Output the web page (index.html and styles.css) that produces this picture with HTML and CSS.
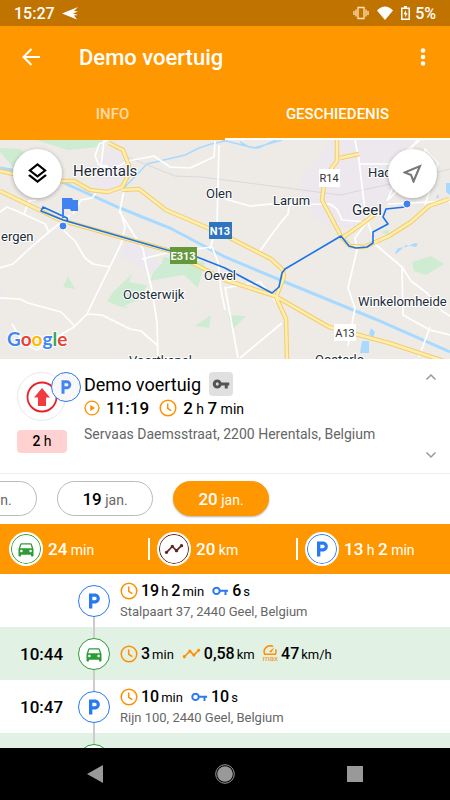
FILE: index.html
```html
<!DOCTYPE html>
<html lang="nl">
<head>
	<meta charset="UTF-8">
	<meta name="viewport" content="width=device-width, initial-scale=1">
	<title>Demo voertuig</title>
	<link rel="stylesheet" href="styles.css">
</head>
<body>
	<!-- icons -->
	<svg class="sprite" aria-hidden="true">
		<symbol id="car" viewBox="0 0 24 24"><path d="M18.92 6.01C18.72 5.42 18.16 5 17.5 5h-11c-.66 0-1.21.42-1.42 1.01L3 12v8c0 .55.45 1 1 1h1c.55 0 1-.45 1-1v-1h12v1c0 .55.45 1 1 1h1c.55 0 1-.45 1-1v-8l-2.08-5.99zM6.5 16c-.83 0-1.5-.67-1.5-1.5S5.67 13 6.5 13s1.5.67 1.5 1.5S7.33 16 6.5 16zm11 0c-.83 0-1.5-.67-1.5-1.5s.67-1.5 1.5-1.5 1.5.67 1.5 1.5-.67 1.5-1.5 1.5zM5 11l1.5-4.5h11L19 11H5z"/></symbol>
		<symbol id="parking" viewBox="0 0 24 24"><path d="M13 3H6v18h4v-6h3c3.31 0 6-2.69 6-6s-2.69-6-6-6zm.2 8H10V7h3.2c1.1 0 2 .9 2 2s-.9 2-2 2z"/></symbol>
		<symbol id="route" viewBox="0 0 24 24"><path d="M23 8c0 1.1-.9 2-2 2-.18 0-.35-.02-.51-.07l-3.56 3.55c.05.16.07.34.07.52 0 1.1-.9 2-2 2s-2-.9-2-2c0-.18.02-.36.07-.52l-2.55-2.55c-.16.05-.34.07-.52.07s-.36-.02-.52-.07l-4.55 4.56c.05.16.07.33.07.51 0 1.1-.9 2-2 2s-2-.9-2-2 .9-2 2-2c.18 0 .35.02.51.07l4.56-4.55C8.02 9.36 8 9.18 8 9c0-1.1.9-2 2-2s2 .9 2 2c0 .18-.02.36-.07.52l2.55 2.55c.16-.05.34-.07.52-.07s.36.02.52.07l3.55-3.56C19.02 8.35 19 8.18 19 8c0-1.1.9-2 2-2s2 .9 2 2z"/></symbol>
		<symbol id="key" viewBox="0 0 24 24"><path d="M12.65 10C11.83 7.67 9.61 6 7 6c-3.31 0-6 2.69-6 6s2.69 6 6 6c2.61 0 4.83-1.67 5.65-4H17v4h4v-4h2v-4H12.65zM7 14c-1.1 0-2-.9-2-2s.9-2 2-2 2 .9 2 2-.9 2-2 2z"/></symbol>
		<symbol id="contact" viewBox="0 0 17 18"><path d="M4.500 5.700a3.200 3.200 0 1 0 0 6.400a3.200 3.200 0 1 0 0-6.400M7.700 8.700h8.300M13.500 9v4" fill="none" stroke="currentColor" stroke-width="2"/></symbol>
		<symbol id="clock" viewBox="0 0 18 18"><g fill="none" stroke="currentColor" stroke-width="1.500"><circle cx="9" cy="9" r="7.800"/><path d="M8.700 4.500v4.800l3.600 2.400"/></g></symbol>
		<symbol id="start" viewBox="0 0 18 18"><circle cx="9" cy="9" r="7.800" fill="none" stroke="currentColor" stroke-width="1.500"/><path d="M7 5.500l5.500 3.500L7 12.500z"/></symbol>
	</svg>

	<div class="app">
		<header class="header">
			<div class="statusbar">
				<span class="statusbar-time">15:27</span>
				<svg class="statusbar-plane" width="17" height="13" viewBox="0 0 17 13"><path d="M0 6.500L16 0l-4 4 4 .5-5 2 5 1.500-4 .5 3 4z"/></svg>
				<svg width="16" height="14" viewBox="0 0 16 14"><path d="M5 1.500h6v11H5zM3 3.500v7M13 3.500v7M1 5v4M15 5v4" fill="none" stroke="#ffe4b8" stroke-width="1.300"/></svg>
				<svg width="18" height="14" viewBox="0 0 18 14"><path d="M1 4.500Q9-3.500 17 4.500L9 14z"/></svg>
				<svg width="9" height="14" viewBox="0 0 9 14"><path d="M3 0h3v1.500h3V14H0V1.500h3zM1.500 3v9.500h6V3z" fill-rule="evenodd"/><path d="M5 4L2.500 8.200h1.800L4 11.500l2.700-4.300H4.900z"/></svg>
				<span class="statusbar-battery">5%</span>
			</div>
			<div class="toolbar">
				<button class="icon-button" aria-label="Terug">
					<svg width="18" height="18" viewBox="0 0 18 18"><path d="M18 9H2M9.500 1L1.500 9l8 8" fill="none" stroke="#fff" stroke-width="2"/></svg>
				</button>
				<h1 class="toolbar-title">Demo voertuig</h1>
				<button class="icon-button" aria-label="Meer">
					<svg width="6" height="18" viewBox="0 0 6 18"><circle cx="3" cy="2.500" r="2.300"/><circle cx="3" cy="9" r="2.300"/><circle cx="3" cy="15.500" r="2.300"/></svg>
				</button>
			</div>
			<nav class="tabs">
				<button class="tab">INFO</button>
				<button class="tab tab-active">GESCHIEDENIS</button>
			</nav>
		</header>

		<!-- map -->
		<section class="map">
			<svg class="map-canvas" viewBox="0 0 450 219" preserveAspectRatio="xMidYMid slice">
				<rect width="450" height="219" fill="#eeebe7"/>
				<g fill="#ece8ed">
					<path d="M92 25l20-18 16 5 3 30-20 10-20-9zM126 99l14 1 15 18 8 10-10 7-32-18zM330 0h85l-8 45-50 45-42-10-18-35zM0 140l3 10-3 10z"/>
				</g>
				<g fill="#ceecd2">
					<path d="M14 28L0 12v-4l20 1 15 12-12 25zM36 0h72l-10 7-30 3-16-5zM68 136l7 13-12-2zM132 134l-3 8 18 3-7 14-16 7 8 3-14-3-11-5 6-9zM163 117l42 5-7 26-14-13-19 3-15 3 3-8 9-10zM211 175l-2 13-14-2zM228 175l18 1-14 14zM412 122l19-6 13 8-18 11-12-4zM383 91l6-1-1 5-6-2z"/>
				</g>
				<g fill="none" stroke="#a8daff">
					<path d="M0 28l18 3M62 42L120 68l50 20 55 29 60 25 90 37 75 33" stroke-width="3"/>
					<path d="M222 0l32 8 28-8M225 1l-14 3-12 4-14 7-38 9-23 24M240 2l9 5 9 1 18-8" stroke-width="1.500"/>
				</g>
				<path d="M396 114l10-9 10 2 2-3-3-1-9 4-8 1-3 5zM371 188l4 4-2 6-4-4zM362 201h7v12h-9zM446 43h4v12l-4-3zM436 58l2-4 1 4z" fill="#a8daff"/>
				<path d="M125 16l50 20 26 1 24 3 70 9 45 6 50-11 60-15" fill="none" stroke="#d8d9da"/>
				<g fill="none" stroke="#fff" stroke-width="1.700" stroke-linejoin="round">
					<path d="M108 0l-9 4-4 12 4 9 9 1M104 0l-2 18-1 8 12 3 15-8 26-5 16 11 20 1 24-11 1-16M124 50l-4 20 5 17-4 17-34 70-13 13-27 16-10 7-13-6-12-20M119 71l24 38 3 16 6 25 5 33 1 36M142 119l24-6 46-6 6 15 3 28 4 20M210 109l7-24 2-80M0 72l7-5 10 4 28 13 4 8-20 17-16 15-13 4M49 92l11-9 10-8M60 87l15 14 10 17 8 6 17 3M73 74l8-14 11-2 4-5M24 74l5-13 7-1M0 158l20 1 8 4 33 9 14 14M87 174l15 1 28 14 11 2 16 14"/>
					<path d="M225 59l25 7 22-2 13 1 45-1 7 5 5 11 24 2M289 67l-1 7-6 7-10 13-12 17M355 0l4 20 5 43 4 20 8 22 26 22 9 14 16 12 15 18 8 5M402 126l1 49 27 15 20 5M359 24h30l31-24M388 60l34-35 3-16 13 14-13 42M366 83l-11 15 2 12-9 38 7 20-7 38M388 64l62-3 3 15M430 187l-11 30M387 61l18-42 12-19M225 147l13 71M225 148l35-6 21 26M240 218l42-35"/>
				</g>
				<g fill="none" stroke="#f1cd6c" stroke-width="4.500" stroke-linejoin="round">
					<path d="M109 3l14 7 6 16-1 10-6 11-14 5-18-2-16-9H60M0 31l14 3M122 50l17-1 27 21 42 18 22 10 41 21 12 11 1 7-8 20 10 22 1 40M0 51l60 29 110 31 55 29 50 16 54 31 60 16 61 20M337 0v21l-12 16-3 23 20 38 20-14 14-11M340 18l19-4M342 98l8 8 14 1 25-11 22-14 18-16 20-7"/>
				</g>
				<g fill="none" stroke="#ffeeae" stroke-width="2.500" stroke-linejoin="round">
					<path d="M109 3l14 7 6 16-1 10-6 11-14 5-18-2-16-9H60M0 31l14 3M122 50l17-1 27 21 42 18 22 10 41 21 12 11 1 7-8 20 10 22 1 40M0 51l60 29 110 31 55 29 50 16 54 31 60 16 61 20M337 0v21l-12 16-3 23 20 38 20-14 14-11M340 18l19-4M342 98l8 8 14 1 25-11 22-14 18-16 20-7"/>
				</g>
				<!-- driven route -->
				<path d="M68 82L67 78 43 67 41 71 63 80 167 110 197 117 225 128 272 153 279 147 282 133 285 129 341 96 349 106 356 108 367 107 373 103 373 92 388 84 383 77 386 69 405 67" fill="none" stroke="#1a73e8" stroke-width="1.600" stroke-linejoin="round"/>
				<g fill="#3f82f0">
					<path d="M62 58h10l1 2h5v11h-7l-1-2h-6v9h-2z"/>
					<circle cx="63" cy="86" r="4" stroke="#fff"/>
					<circle cx="407" cy="64" r="4" stroke="#fff"/>
				</g>
				<g class="map-shield">
					<rect x="209" y="82" width="23" height="17" fill="#2f75bd"/>
					<rect x="170" y="107" width="27" height="17" fill="#65983c"/>
					<rect x="319" y="29" width="21" height="18" fill="#fff"/>
					<rect x="334" y="184" width="22" height="17" fill="#fff"/>
					<text x="220" y="95" fill="#fff" font-weight="700">N13</text>
					<text x="183" y="120" fill="#fff" font-weight="700">E313</text>
					<text x="329" y="42" fill="#333">R14</text>
					<text x="345" y="197" fill="#333">A13</text>
				</g>
				<g class="map-label">
					<text class="map-label-large" x="73" y="36">Herentals</text>
					<text class="map-label-large" x="352" y="75">Geel</text>
					<text x="206" y="58">Olen</text>
					<text x="273" y="65">Larum</text>
					<text x="368" y="37">Hadschot</text>
					<text x="1" y="101">ergen</text>
					<text x="204" y="140">Oevel</text>
					<text x="123" y="159">Oosterwijk</text>
					<text x="358" y="166">Winkelomheide</text>
					<text x="129" y="225">Voortkapel</text>
					<text x="315" y="224">Oosterlo</text>
				</g>
				<text class="map-google" x="7" y="206"><tspan fill="#4285f4">G</tspan><tspan fill="#ea4335">o</tspan><tspan fill="#fbbc05">o</tspan><tspan fill="#4285f4">g</tspan><tspan fill="#34a853">l</tspan><tspan fill="#ea4335">e</tspan></text>
			</svg>
			<div class="map-actions">
				<button class="map-button" aria-label="Kaartlagen">
					<svg width="25" height="25" viewBox="0 0 24 24"><path d="M11.990 18.540l-7.370-5.730L3 14.070l9 7 9-7-1.630-1.270-7.380 5.740zM12 16l7.360-5.730L21 9l-9-7-9 7 1.630 1.270L12 16zm0-11.470L17.740 9 12 13.470 6.260 9 12 4.530z"/></svg>
				</button>
				<button class="map-button" aria-label="Mijn locatie">
					<svg width="25" height="25" viewBox="0 0 24 24"><path d="M17.270 6.730l-4.240 10.130-1.320-3.420-.32-.83-.82-.32-3.430-1.330 10.130-4.230M21 3L3 10.530v.98l6.840 2.650L12.480 21h.98L21 3z" fill="#777"/></svg>
				</button>
			</div>
		</section>

		<!-- selected vehicle -->
		<section class="vehicle">
			<div class="vehicle-side">
				<div class="vehicle-avatar">
					<svg width="32" height="32" viewBox="0 0 32 32"><circle cx="16" cy="16" r="14.500" fill="none" stroke="#e8202a" stroke-width="1.800"/><path d="M16 7l8 9.500h-4V25h-8v-8.500H8z" fill="#f23b40"/></svg>
					<span class="vehicle-parked"><svg width="18" height="18"><use href="#parking"/></svg></span>
				</div>
				<span class="vehicle-since"><b>2</b> h</span>
			</div>
			<div class="vehicle-info">
				<div class="vehicle-line">
					<h2 class="vehicle-name">Demo voertuig</h2>
					<span class="vehicle-key"><svg width="18" height="18"><use href="#key"/></svg></span>
				</div>
				<div class="vehicle-line">
					<svg class="orange" width="16" height="16"><use href="#start"/></svg>
					<span class="value"><b>11:19</b></span>
					<svg class="orange" width="18" height="18"><use href="#clock"/></svg>
					<span class="value"><b>2</b> h <b>7</b> min</span>
				</div>
				<div class="vehicle-address">Servaas Daemsstraat, 2200 Herentals, Belgium</div>
			</div>
			<div class="vehicle-switch">
				<button class="icon-button" aria-label="Vorige"><svg width="12" height="8" viewBox="0 0 12 8"><path d="M1.500 6.500L6 2l4.500 4.500"/></svg></button>
				<button class="icon-button" aria-label="Volgende"><svg width="12" height="8" viewBox="0 0 12 8"><path d="M1.500 1.500L6 6l4.500-4.500"/></svg></button>
			</div>
		</section>

		<div class="days">
			<button class="day"><b>18</b> jan.</button>
			<button class="day"><b>19</b> jan.</button>
			<button class="day day-active"><b>20</b> jan.</button>
		</div>

		<div class="summary">
			<div class="summary-item">
				<span class="marker marker-car"><svg width="20" height="20"><use href="#car"/></svg></span>
				<span class="value"><b>24</b> min</span>
			</div>
			<div class="summary-item">
				<span class="marker marker-route"><svg width="20" height="20"><use href="#route"/></svg></span>
				<span class="value"><b>20</b> km</span>
			</div>
			<div class="summary-item">
				<span class="marker marker-parking"><svg width="20" height="20"><use href="#parking"/></svg></span>
				<span class="value"><b>13</b> h <b>2</b> min</span>
			</div>
		</div>

		<!-- history of the day -->
		<ul class="history">
			<li class="trip trip-first">
				<span class="trip-time"></span>
				<div class="trip-line"><span class="marker marker-parking"><svg width="20" height="20"><use href="#parking"/></svg></span></div>
				<div class="trip-info">
					<div class="trip-values">
						<svg class="orange" width="18" height="18"><use href="#clock"/></svg>
						<span class="value"><b>19</b><i>h</i><b>2</b><i>min</i></span>
						<svg class="blue" width="17" height="18"><use href="#contact"/></svg>
						<span class="value"><b>6</b><i>s</i></span>
					</div>
					<div class="trip-address">Stalpaart 37, 2440 Geel, Belgium</div>
				</div>
			</li>
			<li class="trip trip-drive">
				<time class="trip-time">10:44</time>
				<div class="trip-line"><span class="marker marker-car"><svg width="20" height="20"><use href="#car"/></svg></span></div>
				<div class="trip-info">
					<div class="trip-values">
						<svg class="orange" width="18" height="18"><use href="#clock"/></svg>
						<span class="value"><b>3</b><i>min</i></span>
						<svg class="orange" width="19" height="19"><use href="#route"/></svg>
						<span class="value"><b>0,58</b><i>km</i></span>
						<span class="maxspeed">
							<svg width="14" height="11" viewBox="0 0 14 11"><path d="M10 1.500a6 6 0 0 0-8.300 7.800h10.600a6 6 0 0 0 .3-5" fill="none" stroke="currentColor" stroke-width="1.500"/><path d="M11.500 2.500L8.200 7.600 6 6.500z"/></svg>
							max
						</span>
						<span class="value"><b>47</b><i>km/h</i></span>
					</div>
				</div>
			</li>
			<li class="trip">
				<time class="trip-time">10:47</time>
				<div class="trip-line"><span class="marker marker-parking"><svg width="20" height="20"><use href="#parking"/></svg></span></div>
				<div class="trip-info">
					<div class="trip-values">
						<svg class="orange" width="18" height="18"><use href="#clock"/></svg>
						<span class="value"><b>10</b><i>min</i></span>
						<svg class="blue" width="17" height="18"><use href="#contact"/></svg>
						<span class="value"><b>10</b><i>s</i></span>
					</div>
					<div class="trip-address">Rijn 100, 2440 Geel, Belgium</div>
				</div>
			</li>
			<li class="trip trip-drive">
				<span class="trip-time"></span>
				<div class="trip-line"><span class="marker marker-car"><svg width="20" height="20"><use href="#car"/></svg></span></div>
			</li>
		</ul>

		<nav class="navbar">
			<button class="icon-button" aria-label="Terug"><svg width="16" height="18" viewBox="0 0 16 18"><path d="M16 0v18L0 9z"/></svg></button>
			<button class="icon-button" aria-label="Start"><svg width="20" height="20" viewBox="0 0 20 20"><circle cx="10" cy="10" r="7.800"/><circle cx="10" cy="10" r="9.300" fill="none" stroke="#999"/></svg></button>
			<button class="icon-button" aria-label="Recent"><svg width="16" height="16" viewBox="0 0 16 16"><path d="M0 0h16v16H0z"/></svg></button>
		</nav>
	</div>
</body>
</html>
```
FILE: styles.css
```css
* {
	box-sizing: border-box;
}
body {
	margin: 0;
	background: #fff;
	color: #000;
	font-family: Roboto, "Noto Sans", sans-serif;
	font-size: 14px;
}
button {
	margin: 0;
	padding: 0;
	border: none;
	background: none;
	color: inherit;
	font-family: inherit;
	cursor: pointer;
}
svg {
	display: block;
	flex: none;
	fill: currentColor;
}
b {
	font-weight: 500;
}
i {
	font-style: normal;
}
.sprite {
	display: none;
}
.app {
	display: flex;
	flex-direction: column;
	height: 100vh;
	overflow: hidden;
}
.app > * {
	flex: none;
}
.icon-button {
	display: flex;
	align-items: center;
	justify-content: center;
}
.orange {
	color: #ff8f00;
}
.blue {
	color: #2979f2;
}

/* header */
.header {
	background: #ff9800;
	color: #fff;
}
.statusbar {
	display: flex;
	align-items: center;
	gap: 7px;
	height: 26px;
	padding: 0 14px;
	background: #c17300;
	font-size: 16px;
	font-weight: 500;
}
.statusbar-plane {
	margin-right: auto;
}
.statusbar-battery {
	margin-left: -2px;
}
.toolbar {
	display: flex;
	align-items: center;
	height: 62px;
	padding: 0 24px 0 22px;
}
.toolbar-title {
	flex: 1;
	margin: 0 0 0 39px;
	font-size: 22px;
	font-weight: 500;
}
.tabs {
	display: flex;
	height: 52px;
}
.tab {
	flex: 1;
	border-top: 2px solid transparent;
	border-bottom: 2px solid transparent;
	color: #ffdca8;
	font-size: 15px;
	font-weight: 500;
}
.tab-active {
	border-bottom-color: #fff;
	color: #fff;
}

/* map */
.map {
	position: relative;
	height: 219px;
	overflow: hidden;
}
.map-canvas {
	width: 100%;
	height: 100%;
}
.map-label {
	fill: #202b38;
	stroke: #fff;
	stroke-width: 2px;
	paint-order: stroke;
	font-size: 13px;
}
.map-label-large {
	font-size: 15px;
}
.map-shield {
	font-size: 11px;
	text-anchor: middle;
}
.map-google {
	font-family: Lato, sans-serif;
	font-size: 19px;
	font-weight: 700;
	stroke: #fff;
	stroke-width: 2px;
	paint-order: stroke;
}
.map-actions {
	position: absolute;
	top: 9px;
	left: 13px;
	right: 13px;
	display: flex;
	justify-content: space-between;
}
.map-button {
	display: flex;
	align-items: center;
	justify-content: center;
	width: 49px;
	height: 49px;
	border-radius: 50%;
	background: #fff;
	box-shadow: 0 1px 4px rgba(0, 0, 0, .3);
}

/* vehicle */
.vehicle {
	display: flex;
	height: 115px;
	padding: 13px 12px 0 17px;
	border-bottom: 1px solid #eee;
}
.vehicle-side {
	width: 67px;
}
.vehicle-avatar {
	position: relative;
	display: flex;
	align-items: center;
	justify-content: center;
	width: 49px;
	height: 49px;
	border: 1px solid #e8e8e8;
	border-radius: 50%;
}
.vehicle-parked {
	position: absolute;
	top: -1px;
	left: 33px;
	display: flex;
	align-items: center;
	justify-content: center;
	width: 30px;
	height: 30px;
	border: 1px solid #2979f2;
	border-radius: 50%;
	background: #f8f8f8;
	color: #4285f4;
}
.vehicle-since {
	display: block;
	width: 50px;
	margin-top: 9px;
	border-radius: 4px;
	background: #ffd1d1;
	line-height: 23px;
	text-align: center;
}
.vehicle-info {
	flex: 1;
}
.vehicle-line {
	display: flex;
	align-items: center;
	height: 24px;
}
.vehicle-line svg.orange {
	margin-right: 6px;
}
.vehicle-line .value {
	margin-right: 10px;
}
.vehicle-name {
	margin: 0 8px 0 0;
	font-size: 18px;
	font-weight: 400;
}
.vehicle-key {
	padding: 3px;
	border-radius: 4px;
	background: #e0e0e0;
	color: #555;
}
.vehicle-address {
	color: #666;
	line-height: 28px;
}
.vehicle-switch {
	display: flex;
	flex-direction: column;
	justify-content: space-between;
	padding-bottom: 13px;
}
.vehicle-switch path {
	fill: none;
	stroke: #999;
	stroke-width: 1.5;
}
.vehicle-switch .icon-button {
	width: 14px;
	height: 10px;
}
.value {
	font-size: 14px;
	white-space: nowrap;
}
.value b {
	font-size: 17px;
}

/* days */
.days {
	display: flex;
	gap: 20px;
	padding: 7px 0 8px;
	overflow: hidden;
}
.day {
	flex: none;
	width: 96px;
	height: 35px;
	border: 1px solid #bbb;
	border-radius: 18px;
	color: #666;
	font-size: 14px;
}
.day:first-child {
	margin-left: -59px;
}
.day b {
	color: #000;
	font-size: 17px;
}
.day-active {
	border-color: #ff9800;
	background: #ff9800;
	box-shadow: 0 1px 2px rgba(0, 0, 0, .3);
}
.day-active,
.day-active b {
	color: #fff;
}

/* summary */
.summary {
	display: grid;
	grid-template-columns: repeat(3, 1fr);
	height: 50px;
	padding-right: 6px;
	background: #ff9800;
	color: #fff;
}
.summary-item {
	display: flex;
	align-items: center;
	gap: 5px;
}
.summary-item::before {
	content: "";
	width: 2px;
	height: 22px;
	margin-right: 2px;
}
.summary-item + .summary-item::before {
	background: #fff;
}
.summary .marker {
	width: 34px;
	height: 34px;
	box-shadow: inset 0 0 0 1px currentColor;
	border: 2px solid #fff;
}
.marker {
	display: flex;
	align-items: center;
	justify-content: center;
	width: 32px;
	height: 32px;
	border: 1px solid;
	border-radius: 50%;
	background: #fff;
}
.marker-car {
	color: #2c9c35;
}
.marker-route {
	color: #5d251b;
}
.marker-parking {
	color: #2979f2;
}

/* history */
.app .history {
	flex: 1;
	min-height: 0;
	margin: 0;
	padding: 0;
	overflow: hidden;
	list-style: none;
}
.trip {
	display: flex;
	align-items: center;
	height: 53px;
}
.trip-drive {
	background: #e1f1e4;
}
.trip-time {
	width: 78px;
	padding-left: 20px;
	font-size: 17px;
	font-weight: 500;
}
.trip-line {
	display: flex;
	align-items: center;
	align-self: stretch;
	margin-right: 10px;
	background: linear-gradient(#ccc, #ccc) center / 2px 100% no-repeat;
}
.trip-first .trip-line {
	background-position: bottom;
	background-size: 2px 50%;
}
.trip-values {
	display: flex;
	align-items: center;
	height: 22px;
}
.trip-values .value {
	margin: 0 8px 0 3px;
}
.trip-values b {
	font-size: 16px;
}
.trip-values i {
	margin: 0 3px 0 2px;
	font-size: 13px;
}
.trip-values i:last-child {
	margin-right: 0;
}
.trip-address {
	color: #666;
	font-size: 13px;
	line-height: 20px;
}
.maxspeed {
	display: flex;
	flex-direction: column;
	align-items: center;
	color: #ff8f00;
	font-size: 8px;
	line-height: 6px;
}

/* android buttons */
.navbar {
	display: flex;
	align-items: center;
	justify-content: center;
	gap: 98px;
	height: 52px;
	background: #000;
	color: #999;
}
.navbar .icon-button {
	width: 32px;
	height: 32px;
}
```
